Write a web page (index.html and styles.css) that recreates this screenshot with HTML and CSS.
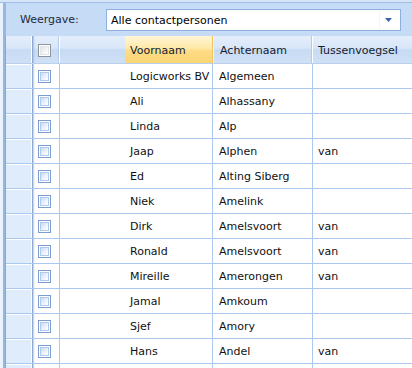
FILE: index.html
```html
<!DOCTYPE html>
<html>
<head>
<meta charset="utf-8">
<link rel="stylesheet" href="styles.css">
</head>
<body>
<div class="topstrip"></div>
<div class="frame">
  <div class="toolbar">
    <span class="label">Weergave:</span>
    <div class="select">
      <span class="select-text">Alle contactpersonen</span>
      <span class="select-btn"><svg width="7" height="4" viewBox="0 0 7 4"><path d="M0 0H7L3.5 4Z" fill="#3d62ac"/></svg></span>
    </div>
  </div>
  <div class="grid">
    <div class="row head">
      <div class="c rh"></div>
      <div class="c ck"><span class="cb hcb"></span></div>
      <div class="c blank"></div>
      <div class="c vn sorted">Voornaam</div>
      <div class="c an">Achternaam</div>
      <div class="c tv">Tussenvoegsel</div>
    </div>
    <div class="row"><div class="c rh"></div><div class="c ck"><span class="cb"></span></div><div class="c blank"></div><div class="c vn">Logicworks BV</div><div class="c an">Algemeen</div><div class="c tv"></div></div>
    <div class="row"><div class="c rh"></div><div class="c ck"><span class="cb"></span></div><div class="c blank"></div><div class="c vn">Ali</div><div class="c an">Alhassany</div><div class="c tv"></div></div>
    <div class="row"><div class="c rh"></div><div class="c ck"><span class="cb"></span></div><div class="c blank"></div><div class="c vn">Linda</div><div class="c an">Alp</div><div class="c tv"></div></div>
    <div class="row"><div class="c rh"></div><div class="c ck"><span class="cb"></span></div><div class="c blank"></div><div class="c vn">Jaap</div><div class="c an">Alphen</div><div class="c tv">van</div></div>
    <div class="row"><div class="c rh"></div><div class="c ck"><span class="cb"></span></div><div class="c blank"></div><div class="c vn">Ed</div><div class="c an">Alting Siberg</div><div class="c tv"></div></div>
    <div class="row"><div class="c rh"></div><div class="c ck"><span class="cb"></span></div><div class="c blank"></div><div class="c vn">Niek</div><div class="c an">Amelink</div><div class="c tv"></div></div>
    <div class="row"><div class="c rh"></div><div class="c ck"><span class="cb"></span></div><div class="c blank"></div><div class="c vn">Dirk</div><div class="c an">Amelsvoort</div><div class="c tv">van</div></div>
    <div class="row"><div class="c rh"></div><div class="c ck"><span class="cb"></span></div><div class="c blank"></div><div class="c vn">Ronald</div><div class="c an">Amelsvoort</div><div class="c tv">van</div></div>
    <div class="row"><div class="c rh"></div><div class="c ck"><span class="cb"></span></div><div class="c blank"></div><div class="c vn">Mireille</div><div class="c an">Amerongen</div><div class="c tv">van</div></div>
    <div class="row"><div class="c rh"></div><div class="c ck"><span class="cb"></span></div><div class="c blank"></div><div class="c vn">Jamal</div><div class="c an">Amkoum</div><div class="c tv"></div></div>
    <div class="row"><div class="c rh"></div><div class="c ck"><span class="cb"></span></div><div class="c blank"></div><div class="c vn">Sjef</div><div class="c an">Amory</div><div class="c tv"></div></div>
    <div class="row"><div class="c rh"></div><div class="c ck"><span class="cb"></span></div><div class="c blank"></div><div class="c vn">Hans</div><div class="c an">Andel</div><div class="c tv">van</div></div>
    <div class="row"><div class="c rh"></div><div class="c ck"><span class="cb"></span></div><div class="c blank"></div><div class="c vn"></div><div class="c an"></div><div class="c tv"></div></div>
  </div>
</div>
</body>
</html>
```

FILE: styles.css
```css
html, body {
  margin: 0;
  padding: 0;
  background: #ffffff;
  overflow: hidden;
}
body {
  width: 412px;
  height: 368px;
  font-family: "DejaVu Sans", sans-serif;
  font-size: 11px;
  color: #111111;
}
.topstrip {
  height: 2px;
  background: #d5e4f7;
}
.frame {
  border-top: 1px solid #a3bfe6;
  padding-left: 5px;
  background: linear-gradient(to right, #eaf2fc 0, #eaf2fc 3px, #9bb6de 3px, #9bb6de 5px, transparent 5px);
}
.toolbar {
  height: 33px;
  display: flex;
  align-items: center;
  background: #c6dbf5;
  border-left: 1px solid #9cb8e0;
}
.label {
  margin-left: 14px;
  width: 86px;
  color: #1e2a3a;
}
.select {
  width: 295px;
  height: 22px;
  border: 1px solid #8fb0dc;
  background: #ffffff;
  display: flex;
  align-items: center;
  box-sizing: border-box;
  margin-top: 1px;
}
.select-text {
  flex: 1;
  padding-left: 4px;
  color: #000;
}
.select-btn {
  width: 16px;
  height: 18px;
  display: flex;
  align-items: center;
  justify-content: center;
  margin-right: 4px;
  border-left: 1px solid #f2f5fa;
}
.grid {
  border-left: 1px solid #8ca8d4;
}
.row {
  display: grid;
  grid-template-columns: 26px 28px 65px 88px 100px 1fr;
  height: 25px;
  box-sizing: border-box;
  border-bottom: 1px solid #abc8ee;
}
.c {
  display: flex;
  align-items: center;
  box-sizing: border-box;
  padding-left: 5px;
  white-space: nowrap;
  overflow: hidden;
}
.row.head {
  height: 28px;
  border-bottom: 1px solid #b9cfec;
  background: linear-gradient(#e4eefb 0, #d8e6f8 45%, #c6daf3 52%, #cfe1f6 100%);
}
.row.head .c {
  color: #15202e;
  padding-top: 1px;
}
.rh {
  background: #dfecfb;
  border-right: 1px solid #ffffff;
  box-shadow: inset 0 1px 0 #ffffff;
  padding-left: 0;
}
.row.head .rh {
  background: transparent;
  box-shadow: none;
}
.ck {
  border-left: 1px solid #8fa9d3;
  background: linear-gradient(to right, #c3c9d2 0, #e6e9ee 1px, #ffffff 2px);
  border-right: 1px solid #abc8ee;
  padding-left: 5px;
}
.row.head .ck {
  background: linear-gradient(to right, #b4c1d3 0, transparent 2px);
  border-right: 1px solid #ffffff;
  box-shadow: inset -1px 0 0 #b4cbe9;
}
.blank {
  padding-left: 0;
}
.vn {
  border-right: 1px solid #abc8ee;
}
.row.head .vn {
  border-right: 1px solid #f2c35e;
}
.sorted {
  background: linear-gradient(#fff6d6 0, #fee9a8 45%, #fddc85 55%, #fbd574 100%);
}
.an {
  border-right: 1px solid #abc8ee;
  padding-left: 6px;
}
.row.head .an {
  border-right: 1px solid #ffffff;
  box-shadow: inset -1px 0 0 #b4cbe9;
  border-left: 1px solid #fff6d9;
}
.cb {
  display: block;
  width: 13px;
  height: 13px;
  box-sizing: border-box;
  border: 1px solid #7b9dd3;
  padding: 1px;
  background: #ffffff;
}
.cb::after {
  content: "";
  display: block;
  width: 100%;
  height: 100%;
  box-sizing: border-box;
  border: 1px solid #b3c9ea;
  background: linear-gradient(135deg, #c9dbf4 0, #eef4fc 60%, #ffffff 100%);
}
.hcb {
  border-color: #8d949e;
}
.hcb::after {
  border-color: #e2e5e9;
  background: linear-gradient(135deg, #dfe2e6 0, #f4f5f7 60%, #ffffff 100%);
}
```
